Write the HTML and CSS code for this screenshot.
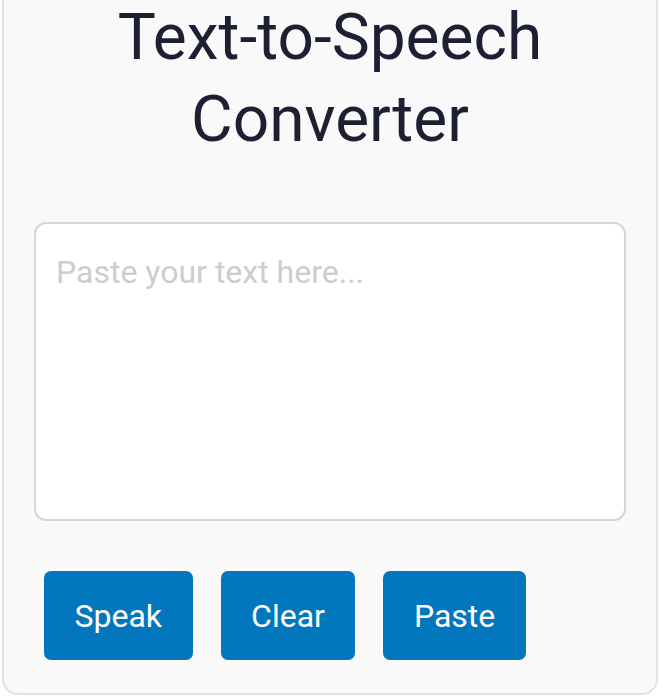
FILE: index.html
```html
<!DOCTYPE html>
<html lang="en">
<head>
<meta charset="utf-8">
<title>Text-to-Speech Converter</title>
<link rel="stylesheet" href="styles.css">
</head>
<body>
  <main class="card">
    <h1 class="title">Text-to-Speech Converter</h1>
    <textarea class="input" placeholder="Paste your text here..."></textarea>
    <div class="actions">
      <button class="btn" type="button">Speak</button>
      <button class="btn" type="button">Clear</button>
      <button class="btn" type="button">Paste</button>
    </div>
  </main>
</body>
</html>
```
FILE: styles.css
```css
html, body {
  margin: 0;
  padding: 0;
  background: #ffffff;
}

body {
  font-family: Roboto, "Liberation Sans", Arial, sans-serif;
  width: 668px;
  height: 697px;
  overflow: hidden;
}

.card {
  box-sizing: border-box;
  width: 656px;
  margin: -40px 0 0 2px;
  padding: 30px 30px 33px;
  background: #f9f9f9;
  border: 2px solid #e2e2e2;
  border-radius: 16px;
  display: flex;
  flex-direction: column;
}

.title {
  margin: 5px 0 61px;
  font-size: 64px;
  font-weight: 400;
  line-height: 82px;
  color: #1d1f33;
  text-align: center;
}

.input {
  box-sizing: border-box;
  width: 592px;
  height: 299px;
  margin: 0;
  padding: 29px 20px;
  border: 2px solid #d6d6d6;
  border-radius: 12px;
  background: #ffffff;
  font-family: Roboto, "Liberation Sans", Arial, sans-serif;
  font-size: 32px;
  line-height: normal;
  color: #333;
  resize: none;
  outline: none;
}

.input::placeholder {
  color: #cdcdcd;
  opacity: 1;
}

.actions {
  display: flex;
  gap: 28px;
  margin-top: 50px;
  padding-left: 10px;
}

.btn {
  box-sizing: border-box;
  height: 89px;
  padding: 0 30.5px;
  border: none;
  border-radius: 7px;
  background: #0277bd;
  color: #ffffff;
  font-family: Roboto, "Liberation Sans", Arial, sans-serif;
  font-size: 32px;
  line-height: 38px;
}
```
